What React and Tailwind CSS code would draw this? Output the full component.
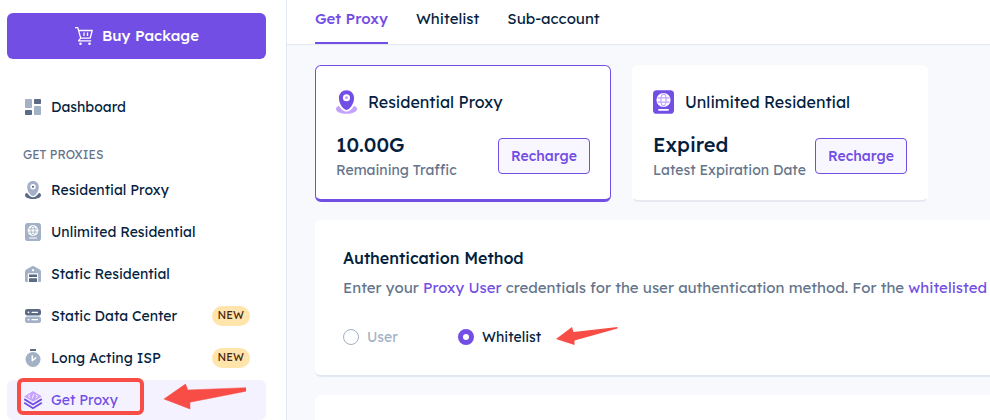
import React, { useState } from "react";

const DARK = "#5b6b85";
const SOFT = "#a3b1c6";

function DashboardIcon() {
  return (
    <svg className="size-5 shrink-0" viewBox="0 0 20 20" aria-hidden="true">
      <rect x="2" y="2" width="7" height="9" rx="0.8" fill={SOFT} />
      <rect x="11" y="2" width="7" height="5" rx="0.8" fill={DARK} />
      <rect x="2" y="13" width="7" height="5" rx="0.8" fill={DARK} />
      <rect x="11" y="9" width="7" height="9" rx="0.8" fill={SOFT} />
    </svg>
  );
}

function PinIcon({ className, pin, base, dot }) {
  return (
    <svg className={className} viewBox="2 1 16 18" aria-hidden="true">
      <path
        d="M4 12.800C2.700 13.400 2 14.300 2 15.300 2 17.500 5.600 19 10 19s8-1.500 8-3.700c0-1-.7-1.900-2-2.500-.8 1.200-1.800 2.300-3.100 3.400-1.700 1.400-4.100 1.400-5.800 0C5.800 15.100 4.800 14 4 12.800z"
        fill={base}
      />
      <path d="M10 1C6.600 1 4.200 3.600 4.200 7c0 3.400 1.700 6.300 3.800 8.200 1.200 1.100 2.800 1.100 4 0 2.100-1.900 3.800-4.800 3.800-8.200 0-3.400-2.400-6-5.800-6z" fill={pin} />
      <circle cx="10" cy="6.800" r="2.700" fill="#fff" />
      <circle cx="10" cy="6.800" r="1.100" fill={dot} />
    </svg>
  );
}

function PassportIcon({ className, fill, line }) {
  return (
    <svg className={className} viewBox="2 1 16 18" aria-hidden="true">
      <rect x="2" y="1" width="16" height="18" rx="2.800" fill={fill} />
      <circle cx="10" cy="8.500" r="5.400" fill="#fff" />
      <g fill="none" stroke={line} strokeWidth="0.900">
        <ellipse cx="10" cy="8.500" rx="2" ry="4.500" />
        <path d="M5.500 6.900h9M5.500 10.100h9" />
      </g>
      <path d="M6.500 16h7" stroke="#fff" strokeWidth="1.200" strokeLinecap="round" />
    </svg>
  );
}

function WarehouseIcon() {
  return (
    <svg className="size-5 shrink-0" viewBox="0 0 20 20" aria-hidden="true">
      <path d="M8.900 2.300a2 2 0 0 1 2.200 0l5.700 3.300c.8.500 1.200 1.200 1.200 2V17a1 1 0 0 1-1 1H3a1 1 0 0 1-1-1V7.600c0-.8.400-1.500 1.200-2z" fill={SOFT} />
      <path d="M4.800 18v-7.500c0-.8.500-1.300 1.300-1.300h7.800c.8 0 1.300.5 1.300 1.300V18z" fill="#fff" />
      <path d="M6 10.600h8V13H6zM6 14.200h8V18H6z" fill={DARK} />
      <circle cx="10" cy="6.200" r="1.100" fill="#fff" />
    </svg>
  );
}

function ServerIcon() {
  return (
    <svg className="size-5 shrink-0" viewBox="0 0 20 20" aria-hidden="true">
      <rect x="2" y="3" width="16" height="6.500" rx="2.200" fill={DARK} />
      <rect x="2" y="10.500" width="16" height="6.500" rx="2.200" fill={SOFT} />
      <path d="M9 6.300h5.500M9 13.700h5.500" stroke="#fff" strokeWidth="1.200" strokeLinecap="round" />
      <circle cx="5.500" cy="6.300" r="0.900" fill="#fff" />
      <circle cx="5.500" cy="13.700" r="0.900" fill="#fff" />
    </svg>
  );
}

function StopwatchIcon() {
  return (
    <svg className="size-5 shrink-0" viewBox="0 0 20 20" aria-hidden="true">
      <rect x="7" y="1" width="6" height="2" rx="0.500" fill={DARK} />
      <circle cx="10" cy="11.500" r="7.500" fill={SOFT} />
      <path d="M9.300 8v4.800l3.500-3" fill="none" stroke="#fff" strokeWidth="1.500" strokeLinecap="round" strokeLinejoin="round" />
    </svg>
  );
}

function LayersIcon() {
  return (
    <svg className="size-5 shrink-0" viewBox="0 0 20 20" aria-hidden="true">
      <path d="M10 1l8.800 5.400L10 11.800 1.200 6.400z" fill="#c4a1ff" />
      <path d="M7.300 4.800L5.400 6.400l1.900 1.500M12.700 4.800l1.900 1.600-1.900 1.500M10.700 4.200L9.300 8.500" fill="none" stroke="#fff" strokeWidth="0.900" />
      <path d="M1.200 9.100L10 14.500l8.800-5.400M1.200 12.800L10 18.200l8.800-5.400" fill="none" stroke="#724ee5" strokeWidth="1.900" />
    </svg>
  );
}

function CartIcon() {
  return (
    <svg className="size-5 shrink-0" viewBox="0 0 20 20" fill="none" stroke="#fff" strokeWidth="1.300" aria-hidden="true">
      <path d="M1 1.700h2.800l2.900 10.500h9.500l2-7.700H4.600" strokeLinejoin="round" />
      <path d="M6.700 12.200l-2.200 2.600h12.700" strokeLinejoin="round" />
      <path d="M10 6.500v3.500M13.500 6.500v3.500" />
      <circle cx="6.500" cy="17.800" r="1.300" fill="#fff" stroke="none" />
      <circle cx="15.500" cy="17.800" r="1.300" fill="#fff" stroke="none" />
    </svg>
  );
}

function NavItem({ icon, label, isNew, active, children }) {
  return (
    <li className="relative">
      <a
        href="#"
        aria-current={active ? "page" : undefined}
        className={
          "flex h-10 items-center gap-2 rounded-md px-4 text-sm " +
          (active ? "bg-[#f4f2ff] text-[#724ee5]" : "text-[#041e3e]")
        }
      >
        {icon}
        <span>{label}</span>
        {isNew && (
          <span className="ml-auto flex h-5 items-center rounded-full bg-[#ffe5ab] px-1.5 text-[11px] text-[#4a2511]">NEW</span>
        )}
      </a>
      {children}
    </li>
  );
}

function PlanCard({ icon, title, value, caption, selected }) {
  return (
    <article
      className={
        "flex w-74 shrink-0 flex-col gap-[17px] rounded-md bg-white px-5 pt-6 pb-[18px] " +
        (selected ? "border border-b-3 border-[#724ee5]" : "border border-b-2 border-white border-b-[#e6e9ef]")
      }
    >
      <div className="flex h-6 items-center gap-[11px]">
        {icon}
        <h2 className="text-base text-[#041e3e]">{title}</h2>
      </div>
      <div className="flex items-center justify-between">
        <div className="whitespace-nowrap">
          <p className="text-xl leading-7 font-medium text-[#041e3e]">{value}</p>
          <p className="text-sm leading-[22px] text-[#64748b]">{caption}</p>
        </div>
        <button type="button" className="h-9 w-[92px] shrink-0 rounded-sm border border-[#724ee5] bg-[#f8f6ff] text-sm font-medium text-[#724ee5]">
          Recharge
        </button>
      </div>
    </article>
  );
}

export default function App() {
  const [method, setMethod] = useState("whitelist");
  const radio =
    "size-4 appearance-none rounded-full border border-[#a3b1c6] bg-white checked:border-5 checked:border-[#724ee5]";
  const greyPin = <span className="flex w-5 justify-center"><PinIcon className="h-[18px] w-4" pin={SOFT} base={DARK} dot={DARK} /></span>;
  const greyPassport = <span className="flex w-5 justify-center"><PassportIcon className="h-[18px] w-4" fill={SOFT} line={SOFT} /></span>;

  return (
    <div className="flex h-screen overflow-hidden bg-[#f8f9fd] font-[Lexend,Inter,sans-serif]">
      <aside className="w-[287px] shrink-0 border-r border-[#e2e8f0] bg-white pt-[13px] pr-5 pl-[7px]">
        <button type="button" className="flex h-[46px] w-full items-center justify-center gap-2 rounded-md bg-[#724ee5] text-[15px] font-medium text-white">
          <CartIcon />
          Buy Package
        </button>
        <nav className="mt-7">
          <ul>
            <NavItem icon={<DashboardIcon />} label="Dashboard" />
          </ul>
          <h2 className="px-4 pt-[18px] pb-[5px] text-xs leading-5 text-[#64748b]">GET PROXIES</h2>
          <ul className="flex flex-col gap-0.5">
            <NavItem icon={greyPin} label="Residential Proxy" />
            <NavItem icon={greyPassport} label="Unlimited Residential" />
            <NavItem icon={<WarehouseIcon />} label="Static Residential" />
            <NavItem icon={<ServerIcon />} label="Static Data Center" isNew />
            <NavItem icon={<StopwatchIcon />} label="Long Acting ISP" isNew />
            <NavItem icon={<LayersIcon />} label="Get Proxy" active>
              <div className="pointer-events-none absolute -top-0.5 left-2.5 h-[37px] w-[127px] rounded-md border-4 border-[#f84c46]" />
              <svg className="pointer-events-none absolute top-1 left-[157px] h-[26px] w-[82px]" viewBox="0 0 82 26" aria-hidden="true">
                <path d="M0 15L21.500 0l2.300 6L82 3.700v3.500L26 18.200V25z" fill="#f84c46" stroke="#f84c46" strokeLinejoin="round" strokeWidth="0.500" />
              </svg>
            </NavItem>
          </ul>
        </nav>
      </aside>

      <main className="min-w-0 flex-1 overflow-hidden">
        <nav className="flex h-[45px] gap-7 border-b border-[#e2e8f0] bg-white px-7 text-[15px] text-[#041e3e]">
          <a href="#" aria-current="page" className="border-b-2 border-[#724ee5] pt-2 font-medium text-[#724ee5]">Get Proxy</a>
          <a href="#" className="pt-2">Whitelist</a>
          <a href="#" className="pt-2">Sub-account</a>
        </nav>

        <div className="flex flex-col gap-[18px] pt-5 pl-7">
          <div className="flex gap-[21px]">
            <PlanCard
              selected
              icon={<PinIcon className="h-6 w-[21px]" pin="#724ee5" base="#c4a1ff" dot="#c4a1ff" />}
              title="Residential Proxy"
              value="10.00G"
              caption="Remaining Traffic"
            />
            <PlanCard
              icon={<PassportIcon className="h-6 w-[21px]" fill="#724ee5" line="#c4a1ff" />}
              title="Unlimited Residential"
              value="Expired"
              caption="Latest Expiration Date"
            />
          </div>

          <section className="rounded-l-md border-b-2 border-[#e2e8f0] bg-white pt-[26px] pb-7 pl-7">
            <h2 className="text-base font-medium text-[#041e3e]">Authentication Method</h2>
            <p className="mt-1.5 overflow-hidden text-[15px] leading-6 whitespace-nowrap text-[#64748b]">
              Enter your <a href="#" className="text-[#724ee5]">Proxy User</a> credentials for the user authentication method. For the{" "}
              <a href="#" className="text-[#724ee5]">whitelisted</a>
            </p>
            <div className="mt-[27px] flex text-sm">
              <label className="flex w-[115px] items-center gap-2 text-[#a3b1c6]">
                <input type="radio" name="method" className={radio} checked={method === "user"} onChange={() => setMethod("user")} />
                User
              </label>
              <label className="relative flex items-center gap-2 text-[#041e3e]">
                <input type="radio" name="method" className={radio} checked={method === "whitelist"} onChange={() => setMethod("whitelist")} />
                Whitelist
                <svg className="pointer-events-none absolute top-0 left-[98px] h-[19px] w-[62px]" viewBox="0 0 62 19" aria-hidden="true">
                  <path d="M0 12L16 0l1.500 5L61.500 0v1.500L18.500 13.500V18z" fill="#f84c46" />
                </svg>
              </label>
            </div>
          </section>

          <section className="h-40 rounded-l-md bg-white" />
        </div>
      </main>
    </div>
  );
}
